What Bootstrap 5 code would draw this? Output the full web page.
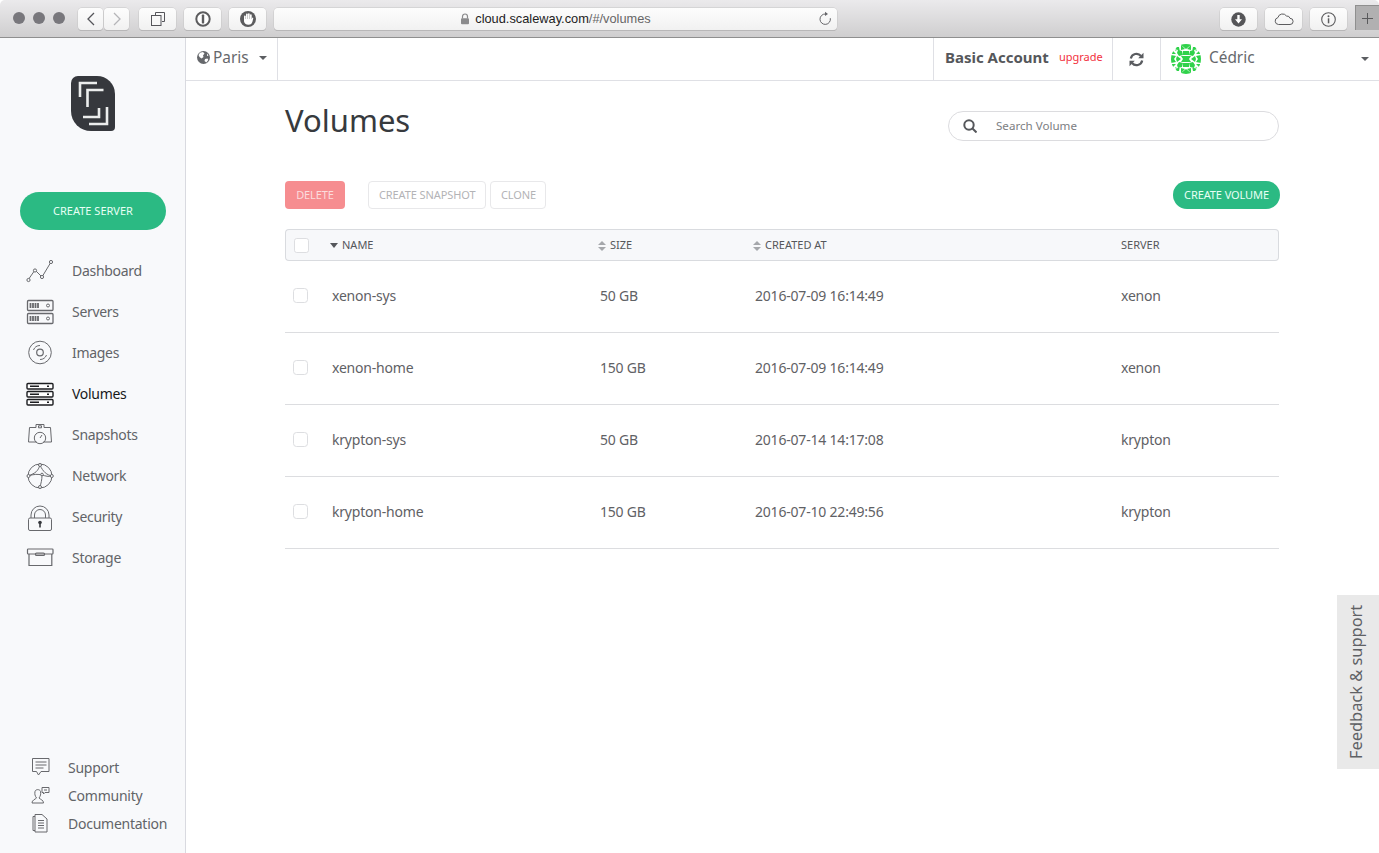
<!DOCTYPE html>
<html lang="en">
<head>
  <meta charset="UTF-8" />
  <meta name="viewport" content="width=device-width, initial-scale=1.0"/>
  <title>Volumes</title>
  <link href="https://cdn.jsdelivr.net/npm/bootstrap@5.3.3/dist/css/bootstrap.min.css" rel="stylesheet">
  <style>
    html, body { height: 100%; }
    body {
      font-family: "Noto Sans", sans-serif;
      color: #5a5c60;
      overflow: hidden;
      background: #fff;
    }
    svg { display: block; flex: none; }

    /* browser toolbar */
    .sf-bar {
      height: 38px;
      padding: 8px 0 0 13px;
      background: linear-gradient(#ebeaec, #cfcecf);
      border-bottom: 1px solid #8f8f8f;
      border-radius: 5px 5px 0 0;
      font-family: "Liberation Sans", sans-serif;
    }
    .sf-dot { width: 12px; height: 12px; border-radius: 50%; background: #78777c; margin-right: 8px; }
    .sf-dots { margin: 4px 5px 0 0; }
    .sf-btn {
      height: 22px;
      width: 37px;
      background: linear-gradient(#fdfdfd, #f1f1f1);
      border: 0;
      border-radius: 4px;
      box-shadow: 0 0 0 .5px #c6c5c6, 0 1px 0 #aaa9aa;
      padding: 0;
      color: #5c5c5e;
    }
    .sf-nav { width: 25px; }
    .sf-url {
      width: 563px;
      height: 22px;
      background: linear-gradient(#fdfdfd, #f1f1f1);
      border-radius: 4px;
      box-shadow: 0 0 0 .5px #c6c5c6, 0 1px 0 #aaa9aa;
      font-size: 12.8px;
      color: #222;
      position: relative;
    }
    .sf-url span { color: #666; }
    .sf-reload { position: absolute; right: 4px; top: 3px; }
    .sf-plus {
      width: 24px;
      height: 25px;
      margin: -3px 0 0 8px;
      background: #b1b0b1;
      border-left: 1px solid #8f8f8f;
      border-top: 1px solid #8f8f8f;
    }

    /* sidebar */
    .side {
      width: 186px;
      flex: none;
      background: #f8f9fb;
      border-right: 1px solid #d9dae0;
      padding-top: 38px;
      height: 815px;
    }
    .logo-box { height: 116px; }
    .btn-green {
      background: #2bba83;
      color: #e8fff5;
      border: 0;
      font-size: 11px;
    }
    .btn-green:hover { background: #2bba83; color: #fff; }
    .btn-server { width: 146px; height: 38px; border-radius: 19px; margin-left: 20px; padding: 0; }
    .side-menu { margin-top: 20px; }
    .side-link {
      height: 41px;
      padding-left: 26px;
      gap: 18px;
      font-size: 14px;
      letter-spacing: -.3px;
      color: #626468;
      text-decoration: none;
    }
    .side-link.on { color: #17181a; }
    .side-foot { padding-bottom: 16px; }
    .foot-link {
      height: 28px;
      padding-left: 30px;
      gap: 18px;
      font-size: 14px;
      letter-spacing: -.25px;
      color: #626468;
      text-decoration: none;
    }

    /* top bar */
    .topline { height: 43px; border-bottom: 1px solid #dfe0e5; flex: none; font-size: 15.4px; }
    .top-cell { height: 42px; border-left: 1px solid #dfe0e5; }
    .cell-zone { width: 92px; border-left: 0; border-right: 1px solid #dfe0e5; padding: 0 0 3px 11px; color: #66686c; }
    .cell-plan { width: 179px; padding: 0 0 3px 11px; }
    .plan-name { font-weight: 700; font-size: 15px; color: #55575b; }
    .plan-up { font-size: 11px; color: #f2303d; margin-left: 10px; }
    .cell-sync { width: 48px; }
    .cell-user { width: 219px; padding-left: 10px; color: #66686c; }
    .user-name { margin: 0 0 3px 8px; }
    .caret-dn { width: 0; height: 0; border: 4px solid transparent; border-top-color: #5c5e62; border-bottom: 0; }

    /* page */
    .page { padding: 0 100px 0 99px; width: 1193px; flex: none; }
    .page-title { font-size: 31px; font-weight: 400; color: #373a3e; margin: 0; line-height: 44px; }
    .head-row { height: 100px; padding-top: 17px; }
    .find {
      width: 331px;
      height: 30px;
      margin-top: 13px;
      border: 1px solid #dcdcdf;
      border-radius: 15px;
      padding-left: 14px;
      position: relative;
    }
    .find input {
      border: 0;
      outline: 0;
      box-shadow: none;
      padding: 0 0 2px 19px;
      font-size: 11.6px;
      font-family: inherit;
      height: 26px;
      background: transparent;
    }
    .find input::placeholder { color: #7c7e82; }
    .act { height: 28px; font-size: 11px; padding: 0 10px; border-radius: 4px; letter-spacing: -.1px; }
    .act-del, .act-del:disabled { width: 60px; background: #f68d90; border: 0; color: #fbdcdc; opacity: 1; margin-right: 23px; }
    .act-off, .act-off:disabled { border: 1px solid #e8e8ea; color: #b3b3b6; background: #fff; opacity: 1; }
    .act-clone { width: 56px; padding: 0; }
    .act-new { height: 28px; width: 107px; border-radius: 14px; padding: 0; margin-right: -1px; letter-spacing: -.1px; }

    .vol-table { table-layout: fixed; border-collapse: separate; border-spacing: 0; width: 994px; margin: 20px 0 0; }
    .vol-table th {
      height: 32px;
      padding: 0;
      background: #f7f8fa;
      border-top: 1px solid #d9dbdf;
      border-bottom: 1px solid #d9dbdf;
      font-size: 11px;
      font-weight: 400;
      color: #55575b;
      vertical-align: middle;
      box-shadow: none;
    }
    .vol-table th:first-child { border-left: 1px solid #d9dbdf; border-radius: 4px 0 0 4px; padding-left: 8px; }
    .vol-table th:last-child { border-right: 1px solid #d9dbdf; border-radius: 0 4px 4px 0; padding-left: 2px; }
    .vol-table td {
      height: 72px;
      padding: 0 0 2px 2px;
      font-size: 14px;
      letter-spacing: -.2px;
      color: #5f6165;
      border-bottom: 1px solid #dcdde0;
      vertical-align: middle;
      box-shadow: none;
      background: #fff;
    }
    .vol-table td:first-child { padding-left: 8px; }
    .tick { width: 15px; height: 15px; margin: 0; border: 1px solid #dddee1; border-radius: 3px; display: block; }
    .sort-ind { display: inline-block; vertical-align: middle; margin-right: 4px; }

    .feedback {
      position: absolute;
      right: 0;
      top: 595px;
      width: 42px;
      height: 174px;
      padding-left: 4px;
      background: #e9e9e9;
      color: #5f6165;
      font-size: 16.4px;
      writing-mode: vertical-rl;
      transform: rotate(180deg);
      text-decoration: none;
    }
  </style>
</head>
<body>
  <div class="sf-bar d-flex align-items-start">
    <div class="sf-dots d-flex">
      <div class="sf-dot"></div><div class="sf-dot"></div><div class="sf-dot"></div>
    </div>
    <button class="sf-btn sf-nav d-flex align-items-center justify-content-center" type="button" aria-label="Back">
      <svg width="10" height="14" viewBox="0 0 10 14" fill="none" stroke="#55555a" stroke-width="1.3"><path d="M8 1 2 7l6 6"/></svg>
    </button>
    <button class="sf-btn sf-nav d-flex align-items-center justify-content-center" type="button" aria-label="Forward" style="margin-left:1px">
      <svg width="10" height="14" viewBox="0 0 10 14" fill="none" stroke="#b5b5b8" stroke-width="1.3"><path d="M2 1l6 6-6 6"/></svg>
    </button>
    <button class="sf-btn d-flex align-items-center justify-content-center" style="margin-left:10px" type="button" aria-label="Tabs">
      <svg width="14" height="14" viewBox="0 0 14 14" fill="none" stroke="#55555a" stroke-width="1"><path d="M4.500 3V.5h9v9H11"/><rect x=".5" y="3.500" width="9.500" height="10" fill="#f8f8f8"/></svg>
    </button>
    <button class="sf-btn d-flex align-items-center justify-content-center" style="margin-left:8px" type="button" aria-label="1Password">
      <svg width="16" height="16" viewBox="0 0 16 16"><circle cx="8" cy="8" r="6.700" fill="#fff" stroke="#5c5c5e" stroke-width="2"/><rect x="6.800" y="3.600" width="2.400" height="8.800" rx=".6" fill="#5c5c5e"/></svg>
    </button>
    <button class="sf-btn d-flex align-items-center justify-content-center" style="margin-left:8px" type="button" aria-label="Blocker">
      <svg width="16" height="16" viewBox="0 0 16 16"><circle cx="8" cy="8" r="8" fill="#5c5c5e"/><g fill="#fff"><rect x="4" y="4.500" width="1.700" height="6" rx=".8"/><rect x="6" y="2.500" width="1.700" height="7" rx=".8"/><rect x="8" y="2.200" width="1.700" height="7" rx=".8"/><rect x="10" y="3.200" width="1.700" height="6" rx=".8"/><path d="M4 8h7.700l.6-1.500 1 .4-.8 3.600c-.5 2-1.800 3.300-4 3.300-2.500 0-4.500-1.500-4.500-3.800z"/></g></svg>
    </button>
    <div class="sf-url d-flex align-items-center justify-content-center" style="margin-left:8px">
      <svg width="10" height="12" viewBox="0 0 10 12" style="margin-right:5px"><path d="M2.500 5.500V3.500a2.500 2.500 0 0 1 5 0v2" fill="none" stroke="#8b8b8d" stroke-width="1.200"/><rect x="1" y="5.200" width="8" height="6" rx="1" fill="#8b8b8d"/></svg>
      cloud.scaleway.com<span>/#/volumes</span>
      <svg class="sf-reload" width="16" height="16" viewBox="0 0 16 16" fill="none" stroke="#66666a" stroke-width="1"><path d="M8.500 3a5.200 5.200 0 1 0 4.800 4.200"/><path d="M8 .8l3 2.200-3 2z" fill="#66666a" stroke="none"/></svg>
    </div>
    <div class="d-flex ms-auto">
      <button class="sf-btn d-flex align-items-center justify-content-center" type="button" aria-label="Downloads">
        <svg width="15" height="15" viewBox="0 0 15 15"><circle cx="7.500" cy="7.500" r="7.200" fill="#555558"/><path d="M6.300 3h2.400v4.200h2.300L7.500 11.500 4 7.200h2.300z" fill="#fff"/></svg>
      </button>
      <button class="sf-btn d-flex align-items-center justify-content-center" style="margin-left:8px" type="button" aria-label="iCloud">
        <svg width="20" height="12" viewBox="0 0 20 12" fill="none" stroke="#5c5c5e"><path d="M4.500 11.500a3.500 3.500 0 0 1-.6-6.900A4.800 4.800 0 0 1 12.500 3a3.200 3.200 0 0 1 3.500 2.300 3.100 3.100 0 0 1 0 6.200z"/></svg>
      </button>
      <button class="sf-btn d-flex align-items-center justify-content-center" style="margin-left:8px" type="button" aria-label="Info">
        <svg width="15" height="15" viewBox="0 0 15 15"><circle cx="7.500" cy="7.500" r="6.800" fill="none" stroke="#5c5c5e" stroke-width="1.100"/><rect x="6.800" y="6.300" width="1.500" height="5" fill="#5c5c5e"/><circle cx="7.500" cy="4.300" r="1" fill="#5c5c5e"/></svg>
      </button>
      <div class="sf-plus d-flex align-items-center justify-content-center">
        <svg width="11" height="11" viewBox="0 0 11 11" stroke="#5a5a5c"><path d="M5.500 0v11M0 5.500h11"/></svg>
      </div>
    </div>
  </div>

  <div class="d-flex position-relative">
    <aside class="side d-flex flex-column">
      <div class="logo-box d-flex justify-content-center">
        <svg width="44" height="55" viewBox="0 0 44 55">
          <path d="M7 0h19a18 18 0 0 1 18 18v33a4 4 0 0 1-4 4H20A20 20 0 0 1 0 35V7a7 7 0 0 1 7-7z" fill="#36383d"/>
          <g fill="none" stroke="#eceded" stroke-width="2.600">
            <path d="M9 21V7h17"/><path d="M16.500 31V14h16"/>
            <path d="M28 32v9H12"/><path d="M36 31v17H18"/>
          </g>
        </svg>
      </div>
      <div><button type="button" class="btn btn-green btn-server">CREATE SERVER</button></div>

      <nav class="side-menu">
        <a href="#" class="side-link d-flex align-items-center">
          <svg width="28" height="28" viewBox="0 0 28 28" fill="#f8f9fb" stroke="#68696d"><path d="M2 23 9 13l7 7 9-15"/><circle cx="2.500" cy="23" r="1.600"/><circle cx="9" cy="13.500" r="1.600"/><circle cx="16" cy="20" r="1.600"/><circle cx="25" cy="5" r="1.600"/></svg>
          Dashboard
        </a>
        <a href="#" class="side-link d-flex align-items-center">
          <svg width="28" height="28" viewBox="0 0 28 28" fill="none" stroke="#68696d" stroke-width="1.300"><rect x="1.500" y="2.500" width="25.500" height="10" rx="1"/><rect x="1.500" y="15.500" width="25.500" height="10" rx="1"/><path d="M4.500 5v5M7 5v5M9.500 5v5M12 5v5M4.500 18v5M7 18v5M9.500 18v5M12 18v5" stroke-width="1.800"/><circle cx="22" cy="7.500" r="1.500" stroke-width="1"/><circle cx="22" cy="20.500" r="1.500" stroke-width="1"/></svg>
          Servers
        </a>
        <a href="#" class="side-link d-flex align-items-center">
          <svg width="28" height="28" viewBox="0 0 28 28" fill="none" stroke="#68696d"><circle cx="14" cy="13.500" r="11.300"/><circle cx="14" cy="13.500" r="3.300" stroke-width="1.200"/><path d="M14 6.500a7 7 0 0 0-6.500 4.500M14 20.500a7 7 0 0 0 6.500-4.500" stroke-width="1"/></svg>
          Images
        </a>
        <a href="#" class="side-link on d-flex align-items-center">
          <svg width="28" height="28" viewBox="0 0 28 28" fill="#fff" stroke="#1c1d20" stroke-width="1.400"><rect x="1" y="3.500" width="26" height="5.500" rx="1"/><rect x="1" y="11.500" width="26" height="5.500" rx="1"/><rect x="1" y="19.500" width="26" height="5.500" rx="1"/><path d="M4 6.300h9M4 14.300h9M4 22.300h9M21 6.300h2M21 14.300h2M21 22.300h2" stroke-width="1.600"/></svg>
          Volumes
        </a>
        <a href="#" class="side-link d-flex align-items-center">
          <svg width="28" height="28" viewBox="0 0 28 28" fill="none" stroke="#68696d"><path d="M10.500 21H2.500l1-14.500h6.500V3.500h8v3h6.500l1 14.500h-8"/><circle cx="14" cy="17" r="5.700"/><path d="M14 17l2-3M12.500 4.800h3v2h-3z"/></svg>
          Snapshots
        </a>
        <a href="#" class="side-link d-flex align-items-center">
          <svg width="28" height="28" viewBox="0 0 28 28" fill="#f8f9fb" stroke="#68696d"><circle cx="14" cy="14" r="12"/><path d="M14 3c-2 6-4 8-12 11 6-2 10-2 14-1 4 1 6 2 10 1-5-1-9-4-12-11zM16 13c0 5-1 8-2 12" fill="none"/><circle cx="14" cy="3" r="1.500"/><circle cx="2.500" cy="14" r="1.500"/><circle cx="25.800" cy="14" r="1.500"/><circle cx="14" cy="25" r="1.500"/><circle cx="16" cy="12.500" r="1.300"/></svg>
          Network
        </a>
        <a href="#" class="side-link d-flex align-items-center">
          <svg width="28" height="28" viewBox="0 0 28 28" fill="none" stroke="#68696d"><rect x="2.500" y="15" width="23" height="12.500" rx="1.500"/><path d="M5 15V12a9 9 0 0 1 18 0v3M8.500 15v-3a5.500 5.500 0 0 1 11 0v3"/><circle cx="14" cy="19.500" r="1.800" fill="#36383d" stroke="none"/><rect x="13.200" y="20" width="1.600" height="4.500" fill="#36383d" stroke="none"/></svg>
          Security
        </a>
        <a href="#" class="side-link d-flex align-items-center">
          <svg width="28" height="28" viewBox="0 0 28 28" fill="none" stroke="#68696d" stroke-width="1.200"><rect x="1.500" y="5" width="25.500" height="5" rx=".8"/><path d="M3 10v11.500h22.800V10"/><rect x="9.500" y="9" width="9" height="2.500" rx="1"/></svg>
          Storage
        </a>
      </nav>

      <div class="side-foot mt-auto">
        <a href="#" class="foot-link d-flex align-items-center">
          <svg width="20" height="20" viewBox="0 0 20 20" fill="none" stroke="#68696d"><path d="M2.500 1.500h16.500v13H11l-2.500 3.500-2-3.500h-4z"/><path d="M5.500 5h11M5.500 8h11M5.500 11h8"/></svg>
          Support
        </a>
        <a href="#" class="foot-link d-flex align-items-center">
          <svg width="20" height="20" viewBox="0 0 20 20" fill="none" stroke="#68696d"><path d="M2 18c0-3 3-3.500 4.500-5C5 11 4.500 9 5 6.500 5.500 4 10 4 10.500 6.500c.5 2.500 0 4.500-1.500 6.500 1.500 1.500 4.500 2 4.500 5z"/><path d="M12 2.500h7v5h-4l-1.500 1.500v-1.500H12zM14 5h3"/></svg>
          Community
        </a>
        <a href="#" class="foot-link d-flex align-items-center">
          <svg width="20" height="20" viewBox="0 0 20 20" fill="none" stroke="#68696d"><path d="M5 3.500H3v14h2M5 1.500h7l5 4.500v13H5z"/><path d="M8 7.500h6M8 10h6M8 12.500h6M8 15h6"/></svg>
          Documentation
        </a>
      </div>
    </aside>

    <div class="d-flex flex-column">
      <header class="topline d-flex">
        <div class="top-cell cell-zone d-flex align-items-center">
          <svg width="13" height="13" viewBox="0 0 13 13"><circle cx="6.500" cy="6.500" r="6.500" fill="#66686c"/><path d="M3 1.800 6 1l1.500 1.500L6 4.500 6.500 6 4.500 7.500 2.500 6 1.500 4zM8 8l2.500-.5.800 1.500-2 2.500L7.500 10zM10 2.500l1.500 2-1.500.5z" fill="#fff"/></svg>
          <span style="margin-left:3px">Paris</span>
          <span class="caret-dn" style="margin-left:10px"></span>
        </div>
        <div class="flex-grow-1"></div>
        <div class="top-cell cell-plan d-flex align-items-center">
          <span class="plan-name">Basic Account</span><span class="plan-up">upgrade</span>
        </div>
        <div class="top-cell cell-sync d-flex align-items-center justify-content-center">
          <svg width="15" height="15" viewBox="0 0 15 15" fill="none" stroke="#5a5c60" stroke-width="2.200"><path d="M1.800 6.500A5.800 5.800 0 0 1 12 4M13.200 8.500A5.800 5.800 0 0 1 3 11"/><path d="M14.500.8v5.400H9.200zM.5 14.200V8.800h5.300z" fill="#5a5c60" stroke="none"/></svg>
        </div>
        <div class="top-cell cell-user d-flex align-items-center">
          <svg width="30" height="30" viewBox="0 0 30 30">
            <defs>
              <clipPath id="ava"><circle cx="15" cy="15" r="15"/></clipPath>
              <g id="quad" fill="#2fd24a">
                <path d="M9 0h6v5zM3 3l5 0 1 5zM1 6l4 4-4 0zM0 11l5 1-2 3H0zM7 6l4 1 1 4-4 1-2-3zM10 1l4 4-4 1zM12 7h3v4h-3zM6 12l4 3H5zM10 12l5 0v3h-3zM5 5l1 1-2 1z"/>
              </g>
            </defs>
            <g clip-path="url(#ava)">
              <use href="#quad"/>
              <use href="#quad" transform="matrix(-1 0 0 1 30 0)"/>
              <use href="#quad" transform="matrix(1 0 0 -1 0 30)"/>
              <use href="#quad" transform="matrix(-1 0 0 -1 30 30)"/>
            </g>
          </svg>
          <span class="user-name">Cédric</span>
          <span class="caret-dn ms-auto" style="margin-right:10px"></span>
        </div>
      </header>

      <main class="page">
        <div class="head-row d-flex justify-content-between align-items-start">
          <h1 class="page-title">Volumes</h1>
          <div class="find d-flex align-items-center">
            <svg width="14" height="14" viewBox="0 0 14 14" fill="none" stroke="#55575b" stroke-width="2"><circle cx="6" cy="6" r="4.700"/><path d="M9.500 9.500 13.500 13.500"/></svg>
            <input class="form-control" type="text" placeholder="Search Volume">
          </div>
        </div>

        <div class="d-flex align-items-center">
          <button type="button" class="btn act act-del" disabled>DELETE</button>
          <button type="button" class="btn act act-off" disabled>CREATE SNAPSHOT</button>
          <button type="button" class="btn act act-off act-clone ms-1" disabled>CLONE</button>
          <button type="button" class="btn btn-green act-new ms-auto">CREATE VOLUME</button>
        </div>

        <table class="table vol-table">
          <colgroup><col style="width:45px"><col style="width:268px"><col style="width:155px"><col style="width:366px"><col style="width:160px"></colgroup>
          <thead>
            <tr>
              <th><input class="form-check-input tick" type="checkbox" aria-label="Select all"></th>
              <th><svg class="sort-ind" width="8" height="5" viewBox="0 0 8 5"><path d="M0 0h8L4 5z" fill="#55575b"/></svg>NAME</th>
              <th><svg class="sort-ind" width="8" height="10" viewBox="0 0 8 10"><path d="M0 4h8L4 0zM0 6h8l-4 4z" fill="#a5a7ab"/></svg>SIZE</th>
              <th><svg class="sort-ind" width="8" height="10" viewBox="0 0 8 10"><path d="M0 4h8L4 0zM0 6h8l-4 4z" fill="#a5a7ab"/></svg>CREATED AT</th>
              <th>SERVER</th>
            </tr>
          </thead>
          <tbody>
            <tr><td><input class="form-check-input tick" type="checkbox" aria-label="Select"></td><td>xenon-sys</td><td>50 GB</td><td>2016-07-09 16:14:49</td><td>xenon</td></tr>
            <tr><td><input class="form-check-input tick" type="checkbox" aria-label="Select"></td><td>xenon-home</td><td>150 GB</td><td>2016-07-09 16:14:49</td><td>xenon</td></tr>
            <tr><td><input class="form-check-input tick" type="checkbox" aria-label="Select"></td><td>krypton-sys</td><td>50 GB</td><td>2016-07-14 14:17:08</td><td>krypton</td></tr>
            <tr><td><input class="form-check-input tick" type="checkbox" aria-label="Select"></td><td>krypton-home</td><td>150 GB</td><td>2016-07-10 22:49:56</td><td>krypton</td></tr>
          </tbody>
        </table>
      </main>
    </div>
  </div>

  <a href="#" class="feedback d-flex align-items-center justify-content-center">Feedback &amp; support</a>
</body>
</html>
